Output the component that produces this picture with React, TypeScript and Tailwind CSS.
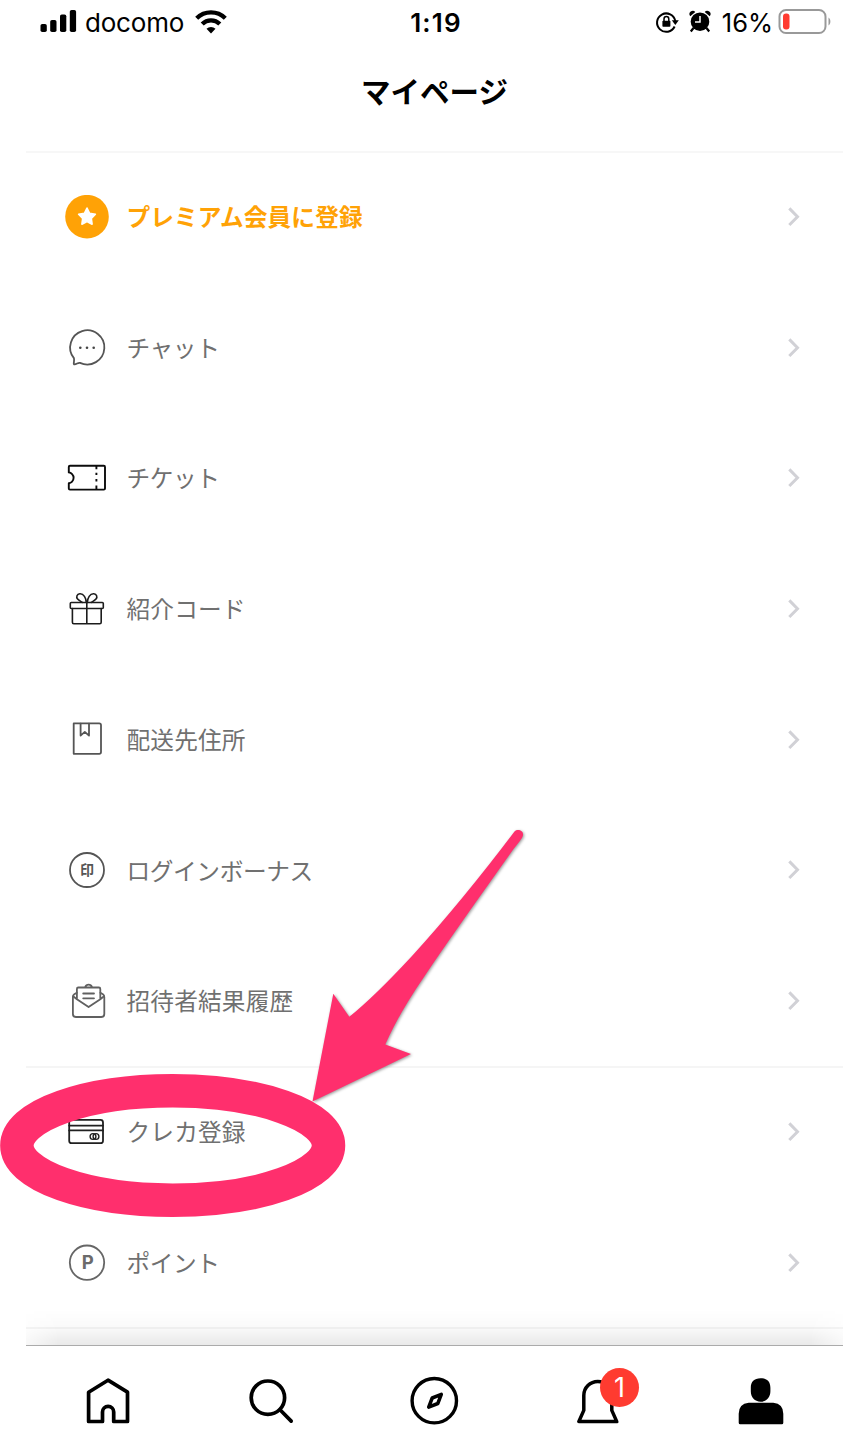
import type { ReactNode } from "react";

const JP = "font-['Noto_Sans_CJK_JP',sans-serif]";

function IconBox({ color = "#555555", width = 1.7, children }: { color?: string; width?: number; children: ReactNode }) {
  return (
    <svg className="size-11 shrink-0" viewBox="0 0 44 44" fill="none" stroke={color} strokeWidth={width} strokeLinecap="round" strokeLinejoin="round">
      {children}
    </svg>
  );
}

const premium = (
  <IconBox color="none">
    <circle cx="22" cy="21.700" r="21.8" fill="#ffa206" />
    <path
      d="M22 13l2.600 5.300 5.800.9-4.100 4.200.8 5.800-5.100-2.600-5.100 2.600.8-5.800-4.100-4.200 5.800-.9z"
      fill="#fff"
      stroke="#fff"
      strokeWidth="1.6"
    />
  </IconBox>
);
const chat = (
  <IconBox width={1.8}>
    <path d="M8.900 32.100A17.100 17.100 0 1 1 15 36.900c-1.700-.6-3.400 1.400-5.300 1.500-.9 0-1-.6-.9-1.400.2-1.600.6-3.300.1-4.900z" />
    <g fill="#444" stroke="none">
      <circle cx="15.300" cy="21.700" r="1.300" />
      <circle cx="22" cy="21.700" r="1.300" />
      <circle cx="28.700" cy="21.700" r="1.300" />
    </g>
  </IconBox>
);
const ticket = (
  <IconBox color="#0c0c0c" width={1.9}>
    <path d="M5 9.800h33.800q1.200 0 1.200 1.200v21.400q0 1.200-1.200 1.200H5q-1.200 0-1.200-1.200v-5.200c2.400-.2 4.800-2.400 4.800-5.400s-2.400-5.200-4.800-5.400V11q0-1.200 1.200-1.200z" />
    <path d="M31.400 10v3.200m0 3.600v2.300m0 4v2.300m0 4v4" strokeLinecap="butt" />
  </IconBox>
);
const gift = (
  <IconBox color="#1c1c1c" width={1.6}>
    <rect x="5.300" y="15.500" width="33" height="6" rx="1" />
    <path d="M7.400 21.500v13.800q0 1.400 1.400 1.400h26q1.400 0 1.400-1.400V21.500M21.800 15.500v21" />
    <path d="M21.300 15.500c-.2-4.500-2.600-9-6.500-8.700-2.900.3-3.900 3.100-2.200 5.200 1.300 1.600 3.400 2.500 4.700 3.400M22.300 15.500c.2-4.500 2.600-9 6.500-8.700 2.900.3 3.900 3.100 2.200 5.200-1.300 1.600-3.400 2.500-4.700 3.400" />
  </IconBox>
);
const address = (
  <IconBox width={1.8}>
    <path d="M8.700 5.400h25.500q1.800 0 1.800 1.800v26.800q0 1.800-1.800 1.800H8.700z" />
    <path d="M15.600 5.600v12l4.200-3.700 4.200 3.700V5.600" />
  </IconBox>
);
const stamp = (
  <IconBox width={1.8}>
    <circle cx="22" cy="22" r="17" />
    <text x="22" y="26.900" textAnchor="middle" fontSize="14" fontWeight="700" fill="#555" stroke="none" className="font-['Noto_Sans_CJK_JP',sans-serif]">
      印
    </text>
  </IconBox>
);
const invite = (
  <IconBox color="#606060" width={1.8}>
    <path d="M11.800 13.700L9.300 15.300Q7.900 16.300 7.900 18v17q0 3 3 3h25.400q3 0 3-3V18q0-1.700-1.400-2.700l-2.500-1.600" />
    <path d="M8.200 17.300l3.700 2.900 11.700 7.900 11.700-7.900 3.700-2.900M11.900 20V9.900q0-1.400 1.400-1.400h20.600q1.400 0 1.400 1.400V20M20 8.300c.7-1.600 2-2.600 3.600-2.600s2.900 1 3.600 2.600" />
    <path d="M18.200 14.500h10.800M18.200 19.300h10.800" />
  </IconBox>
);
const card = (
  <IconBox color="#202020" width={1.8}>
    <rect x="4.200" y="9.900" width="33.800" height="23.300" rx="2.500" />
    <path d="M4.200 15.600h33.800M4.200 20.400h33.800" />
    <circle cx="28" cy="26.500" r="2.900" strokeWidth="1.400" />
    <circle cx="31" cy="26.500" r="2.900" strokeWidth="1.400" />
  </IconBox>
);
const point = (
  <IconBox color="#666666" width={1.8}>
    <circle cx="22" cy="21.700" r="17.200" />
    <text x="22.800" y="28.200" textAnchor="middle" fontSize="18.500" fontWeight="700" fill="#6b6b6b" stroke="none" className="font-['Inter',sans-serif]">
      P
    </text>
  </IconBox>
);

type Item = { label: string; icon: ReactNode; style?: string };

const KANA = "text-[#707070] tracking-[-0.4px]";
const KANJI = "text-[#707070] tracking-[0.15px]";

const primary: Item[] = [
  { label: "プレミアム会員に登録", icon: premium, style: "font-bold text-[#ffa206] tracking-[0.1px]" },
  { label: "チャット", icon: chat, style: KANA },
  { label: "チケット", icon: ticket, style: KANA },
  { label: "紹介コード", icon: gift, style: KANJI },
  { label: "配送先住所", icon: address, style: KANJI },
  { label: "ログインボーナス", icon: stamp, style: KANA },
  { label: "招待者結果履歴", icon: invite, style: KANJI },
];
const payment: Item[] = [
  { label: "クレカ登録", icon: card, style: KANJI },
  { label: "ポイント", icon: point, style: KANA },
];

function Row({ label, icon, style }: Item) {
  return (
    <li className="flex h-[130.7px] items-center pb-[3px] pl-[39px] pr-[42px]">
      {icon}
      <span className={`mb-[1.5px] ml-[17.5px] flex-1 text-[23.7px] leading-8 ${JP} ${style}`}>{label}</span>
      <svg className="h-5 w-3.5" viewBox="0 0 14 20" fill="none" stroke="#d1d1d6" strokeWidth="3">
        <path d="M2.300 1.400l8.200 8.300-8.200 8.300" />
      </svg>
    </li>
  );
}

function StatusBar() {
  return (
    <header className="grid h-11 grid-cols-[1fr_auto_1fr] items-center pl-10 pr-3 font-['Inter',sans-serif] text-black">
      <div className="flex items-center">
        <svg className="-mt-0.5 h-6 w-[38px]" viewBox="0 0 38 24">
          <rect x="0.500" y="15" width="6.300" height="8" rx="1.800" />
          <rect x="10.200" y="11" width="6.300" height="12" rx="1.800" />
          <rect x="20" y="5.500" width="6.300" height="17.500" rx="1.800" />
          <rect x="29.800" y="1" width="6.300" height="22" rx="1.800" />
        </svg>
        <span className="ml-[7px] mt-0.5 w-[103px] text-[26px] leading-8 tracking-[-0.2px]">docomo</span>
        <svg className="ml-[7px] h-6 w-8" viewBox="0 0 32 24" fill="none" stroke="#000" strokeWidth="4.300">
          <path d="M1.700 8.200a20.500 20.500 0 0 1 28.600 0" />
          <path d="M7.200 14a12.500 12.500 0 0 1 17.600 0" />
          <path d="M16 23.500l-4.500-4.700a6.500 6.500 0 0 1 9 0z" fill="#000" stroke="none" />
        </svg>
      </div>
      <time className="-mr-px mt-0.5 text-[26px] font-semibold leading-8 tracking-[1.2px]">1:19</time>
      <div className="flex items-center justify-end">
        <svg className="h-6 w-6" viewBox="0 0 24 24" fill="none" stroke="#000" strokeWidth="2">
          <path d="M19.600 16.500A9.200 9.200 0 1 1 20.300 11" />
          <path d="M16.800 10.300h7l-3.500 4.700z" fill="#000" stroke="none" />
          <rect x="7.400" y="10.800" width="8" height="6" rx=".8" fill="#000" stroke="none" />
          <path d="M9 11V9a2.400 2.400 0 0 1 4.800 0v2" strokeWidth="1.500" />
        </svg>
        <svg className="-mt-0.5 ml-[9px] h-6 w-6" viewBox="0 0 24 24">
          <circle cx="12" cy="12.700" r="9.300" />
          <path d="M2.300 7.200a3.200 3.200 0 0 1 5-4.200zM21.700 7.200a3.200 3.200 0 0 0-5-4.200z" />
          <path d="M5.500 19l-2.700 3.500M18.500 19l2.700 3.500" stroke="#000" strokeWidth="2.200" />
          <path d="M12 7v6H7" fill="none" stroke="#fff" strokeWidth="1.500" />
        </svg>
        <span className="ml-2.5 mt-0.5 text-[25.5px] leading-8">16%</span>
        <svg className="-mt-0.5 ml-[5px] h-7 w-[53px]" viewBox="0 0 53 28">
          <rect x="1.500" y="3" width="46" height="23" rx="6.500" fill="none" stroke="#999" strokeWidth="2" />
          <rect x="5" y="6.500" width="6.500" height="16" rx="3" fill="#ff3b30" />
          <path d="M50.500 10.500c2.500 1.400 2.500 6.600 0 8z" fill="#999" />
        </svg>
      </div>
    </header>
  );
}

function TabIcon({ children }: { children: ReactNode }) {
  return (
    <svg className="size-[60px]" viewBox="0 0 60 60" fill="none" stroke="#000" strokeWidth="3.700" strokeLinejoin="round" strokeLinecap="round">
      {children}
    </svg>
  );
}

function TabBar() {
  return (
    <nav className="ml-[26px] grid h-[108px] grid-cols-5 justify-items-center border-t border-[#ababab] bg-white pt-[25px]">
      <TabIcon>
        <path d="M10.600 21.200L30 9.200l19.500 12v29.300H35.700V41a5.600 5.600 0 0 0-11.200 0v9.500H10.600z" />
      </TabIcon>
      <TabIcon>
        <circle cx="26.900" cy="26.700" r="16.700" />
        <path d="M39 38.800l11.200 11.300" />
      </TabIcon>
      <TabIcon>
        <circle cx="30.300" cy="29.700" r="22.200" strokeWidth="3.400" />
        <path d="M37.300 23.400L33.800 32.500 24.700 36.100 28.200 27z" strokeWidth="3.500" />
      </TabIcon>
      <div className="relative">
        <TabIcon>
          <path d="M10.800 50.600l5-11.200V24.500a14 14 0 0 1 28 0v14.900l5 11.200z" strokeWidth="3.500" />
        </TabIcon>
        <span className="absolute left-[32px] top-[-3px] flex size-[39px] items-center justify-center rounded-full bg-[#ff3b30] font-['Inter',sans-serif] text-[27px] leading-none text-white">
          1
        </span>
      </div>
      <TabIcon>
        <g fill="#000" stroke="none">
          <path d="M29.600 7.300c6.500 0 9.800 3.400 9.800 9.500v3.500c0 6-4 10.400-9.800 10.400s-9.800-4.400-9.800-10.400v-3.500c0-6.100 3.300-9.500 9.800-9.500z" />
          <path d="M17.700 31.700h24.600q10 1 10 11v9.100q0 1.500-1.500 1.500H9.200q-1.500 0-1.500-1.500v-9.100q0-10 10-11z" />
        </g>
      </TabIcon>
    </nav>
  );
}

function Annotation() {
  return (
    <svg className="pointer-events-none absolute left-0 top-0 h-[1453px] w-[843px]" viewBox="0 0 843 1453">
      <path
        className="drop-shadow-[1px_1.5px_1.5px_rgba(0,0,0,0.4)]"
        d="M514.500 831.500C518 828 524.500 831 522.800 836C521.500 840 517 844 510 854C478 899 448 941 424 977Q398 1015 385.300 1044.600L411 1054L312.500 1101.500L333.300 993.700L349.300 1016.800Q374 997 412 956Q462 901 514.500 831.500Z"
        fill="#ff2f6d"
      />
      <ellipse cx="172.700" cy="1145.500" rx="155.800" ry="54.700" fill="none" stroke="#ff2f6d" strokeWidth="33.500" />
    </svg>
  );
}

export default function App() {
  return (
    <div className="relative flex h-[1453px] w-[843px] flex-col overflow-hidden bg-white">
      <StatusBar />
      <h1 className={`ml-[26px] flex h-[107px] items-center justify-center pb-4 text-[29.5px] font-bold leading-10 text-black ${JP}`}>マイページ</h1>
      <main className="ml-[26px] h-[1194px] overflow-hidden">
        <ul className="h-[915px] border-t-2 border-[#f7f7f7]">
          {primary.map((item) => (
            <Row key={item.label} {...item} />
          ))}
        </ul>
        <ul className="h-[263px] border-y-2 border-[#f5f5f5]">
          {payment.map((item) => (
            <Row key={item.label} {...item} />
          ))}
        </ul>
        <div className="-mt-5 h-9 bg-linear-to-b from-transparent via-black/[0.02] to-black/[0.085] mask-x-from-96% mask-x-to-102%" />
      </main>
      <TabBar />
      <Annotation />
    </div>
  );
}
